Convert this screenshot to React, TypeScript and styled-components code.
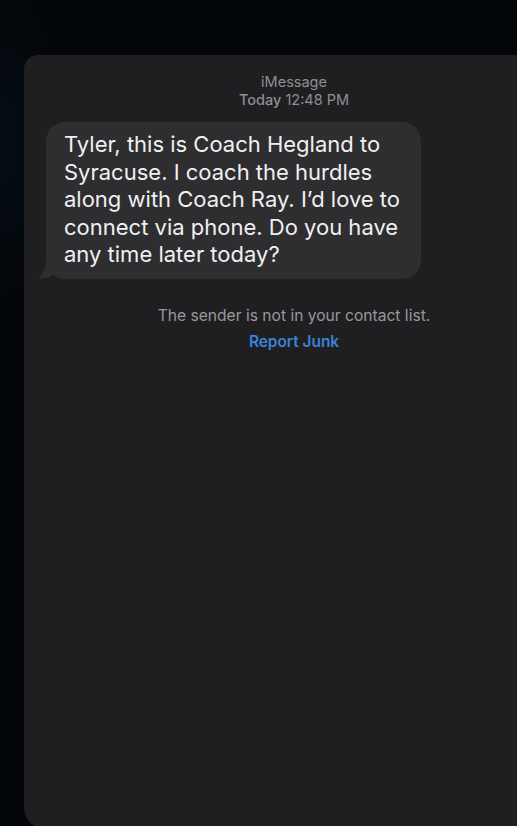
import React from "react";
import styled, { createGlobalStyle } from "styled-components";

const Global = createGlobalStyle`
  html, body {
    margin: 0;
    padding: 0;
    width: 517px;
    height: 826px;
    overflow: hidden;
    background: radial-gradient(ellipse 90px 220px at 0px 140px, #050d16 0%, #030609 75%), #030508;
    font-family: Inter, "Liberation Sans", Arial, sans-serif;
  }
`;

const Screen = styled.div`
  width: 517px;
  height: 826px;
  padding: 55px 0 0 24px;
  box-sizing: border-box;
  overflow: hidden;
`;

const Panel = styled.div`
  width: 540px;
  height: 773px;
  background: #1f1f21;
  border-radius: 14px 0 0 20px;
  display: flex;
  flex-direction: column;
  align-items: center;
  padding-top: 18px;
  box-sizing: border-box;
`;

const Header = styled.div`
  color: #8e8e93;
  font-size: 14.5px;
  line-height: 18px;
  text-align: center;
`;

const Strong = styled.span`
  font-weight: 500;
`;

const Thread = styled.div`
  align-self: stretch;
  padding-left: 22px;
  margin-top: 13px;
`;

const Bubble = styled.div`
  position: relative;
  width: 375px;
  box-sizing: border-box;
  padding: 9px 10px 10px 18px;
  background: #2e2e30;
  border-radius: 19px;
  color: #f0f0f2;
  font-size: 22px;
  line-height: 27.6px;
`;

const Tail = styled.svg`
  position: absolute;
  left: -9px;
  bottom: 0;
  width: 24px;
  height: 22px;
`;

const Notice = styled.div`
  margin-top: 28px;
  color: #98989d;
  font-size: 15.6px;
  line-height: 18px;
  text-align: center;
`;

const Link = styled.div`
  margin-top: 8px;
  color: #3b82d6;
  font-size: 15.4px;
  font-weight: 600;
  line-height: 18px;
`;

export default function App() {
  return (
    <>
      <Global />
      <Screen>
        <Panel>
          <Header>
            iMessage
            <br />
            <Strong>Today</Strong> 12:48 PM
          </Header>
          <Thread>
            <Bubble>
              <Tail viewBox="0 0 24 22">
                <path d="M9 2 C9 11 6 17 1 21.6 C7 21.9 13 20.5 17 17.5 L24 22 L24 0 Z" fill="#2e2e30" />
              </Tail>
              Tyler, this is Coach Hegland to
              <br />
              Syracuse. I coach the hurdles
              <br />
              along with Coach Ray. I’d love to
              <br />
              connect via phone. Do you have
              <br />
              any time later today?
            </Bubble>
          </Thread>
          <Notice>The sender is not in your contact list.</Notice>
          <Link>Report Junk</Link>
        </Panel>
      </Screen>
    </>
  );
}
